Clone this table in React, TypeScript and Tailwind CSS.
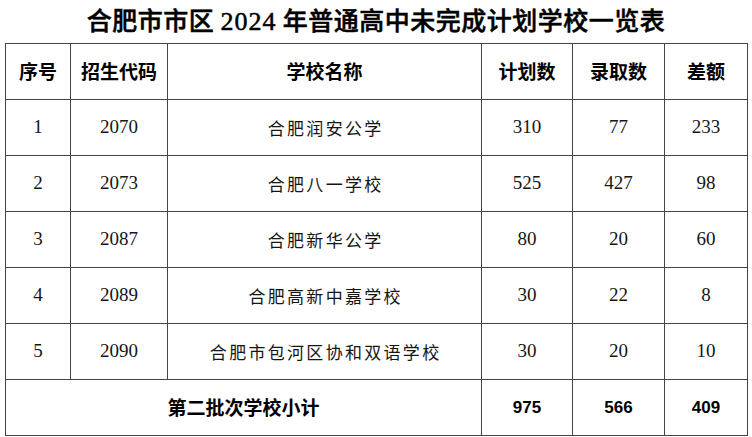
const rows = [
  { no: '1', code: '2070', name: '合肥润安公学', plan: '310', got: '77', diff: '233' },
  { no: '2', code: '2073', name: '合肥八一学校', plan: '525', got: '427', diff: '98' },
  { no: '3', code: '2087', name: '合肥新华公学', plan: '80', got: '20', diff: '60' },
  { no: '4', code: '2089', name: '合肥高新中嘉学校', plan: '30', got: '22', diff: '8' },
  { no: '5', code: '2090', name: '合肥市包河区协和双语学校', plan: '30', got: '20', diff: '10' },
];

const headers = ['序号', '招生代码', '学校名称', '计划数', '录取数', '差额'];

const sans = "font-['Noto_Sans_CJK_SC',sans-serif]";
const serif = "font-['Liberation_Serif','Noto_Sans_CJK_SC',serif]";

export default function App() {
  return (
    <div className="w-[752px] h-[437px] bg-white overflow-hidden text-black">
      {/* title */}
      <div className="h-[43px] flex items-start justify-center">
        <h1
          className={`${sans} text-[25px] tracking-[0.5px] font-medium leading-[38px] whitespace-nowrap [-webkit-text-stroke:0.5px_black]`}
        >
          合肥市市区{' '}
          <span className="font-['Liberation_Serif',serif] text-[26px] tracking-[1px]">2024</span> 年普通高中未完成计划学校一览表
        </h1>
      </div>

      <table className="ml-[5px] w-[742px] table-fixed border-collapse">
        <colgroup>
          <col className="w-[65px]" />
          <col className="w-[97px]" />
          <col className="w-[314px]" />
          <col className="w-[91px]" />
          <col className="w-[92px]" />
          <col className="w-[83px]" />
        </colgroup>
        <thead>
          <tr className="h-[56px]">
            {headers.map((h) => (
              <th
                key={h}
                className={`${sans} border border-[#444] text-[19px] font-bold text-center align-middle leading-normal`}
              >
                {h}
              </th>
            ))}
          </tr>
        </thead>
        <tbody className="text-[#151515]">
          {rows.map((r) => (
            <tr key={r.no} className="h-[56px]">
              <td className={`${serif} border border-[#444] text-[19px] text-center align-middle`}>{r.no}</td>
              <td className={`${serif} border border-[#444] text-[19px] text-center align-middle`}>{r.code}</td>
              <td className="border border-[#444] text-center align-middle">
                <span className={`${sans} text-[17px] tracking-[2.3px] pl-[2.3px] font-normal`}>{r.name}</span>
              </td>
              <td className={`${serif} border border-[#444] text-[19px] text-center align-middle`}>{r.plan}</td>
              <td className={`${serif} border border-[#444] text-[19px] text-center align-middle`}>{r.got}</td>
              <td className={`${serif} border border-[#444] text-[19px] text-center align-middle`}>{r.diff}</td>
            </tr>
          ))}
          <tr className="h-[56px] text-black">
            <td colSpan={3} className={`${sans} border border-[#444] text-[19px] font-bold text-center align-middle`}>
              第二批次学校小计
            </td>
            <td className="border border-[#444] font-['Liberation_Sans',sans-serif] text-[17px] font-bold text-center align-middle">975</td>
            <td className="border border-[#444] font-['Liberation_Sans',sans-serif] text-[17px] font-bold text-center align-middle">566</td>
            <td className="border border-[#444] font-['Liberation_Sans',sans-serif] text-[17px] font-bold text-center align-middle">409</td>
          </tr>
        </tbody>
      </table>
    </div>
  );
}
